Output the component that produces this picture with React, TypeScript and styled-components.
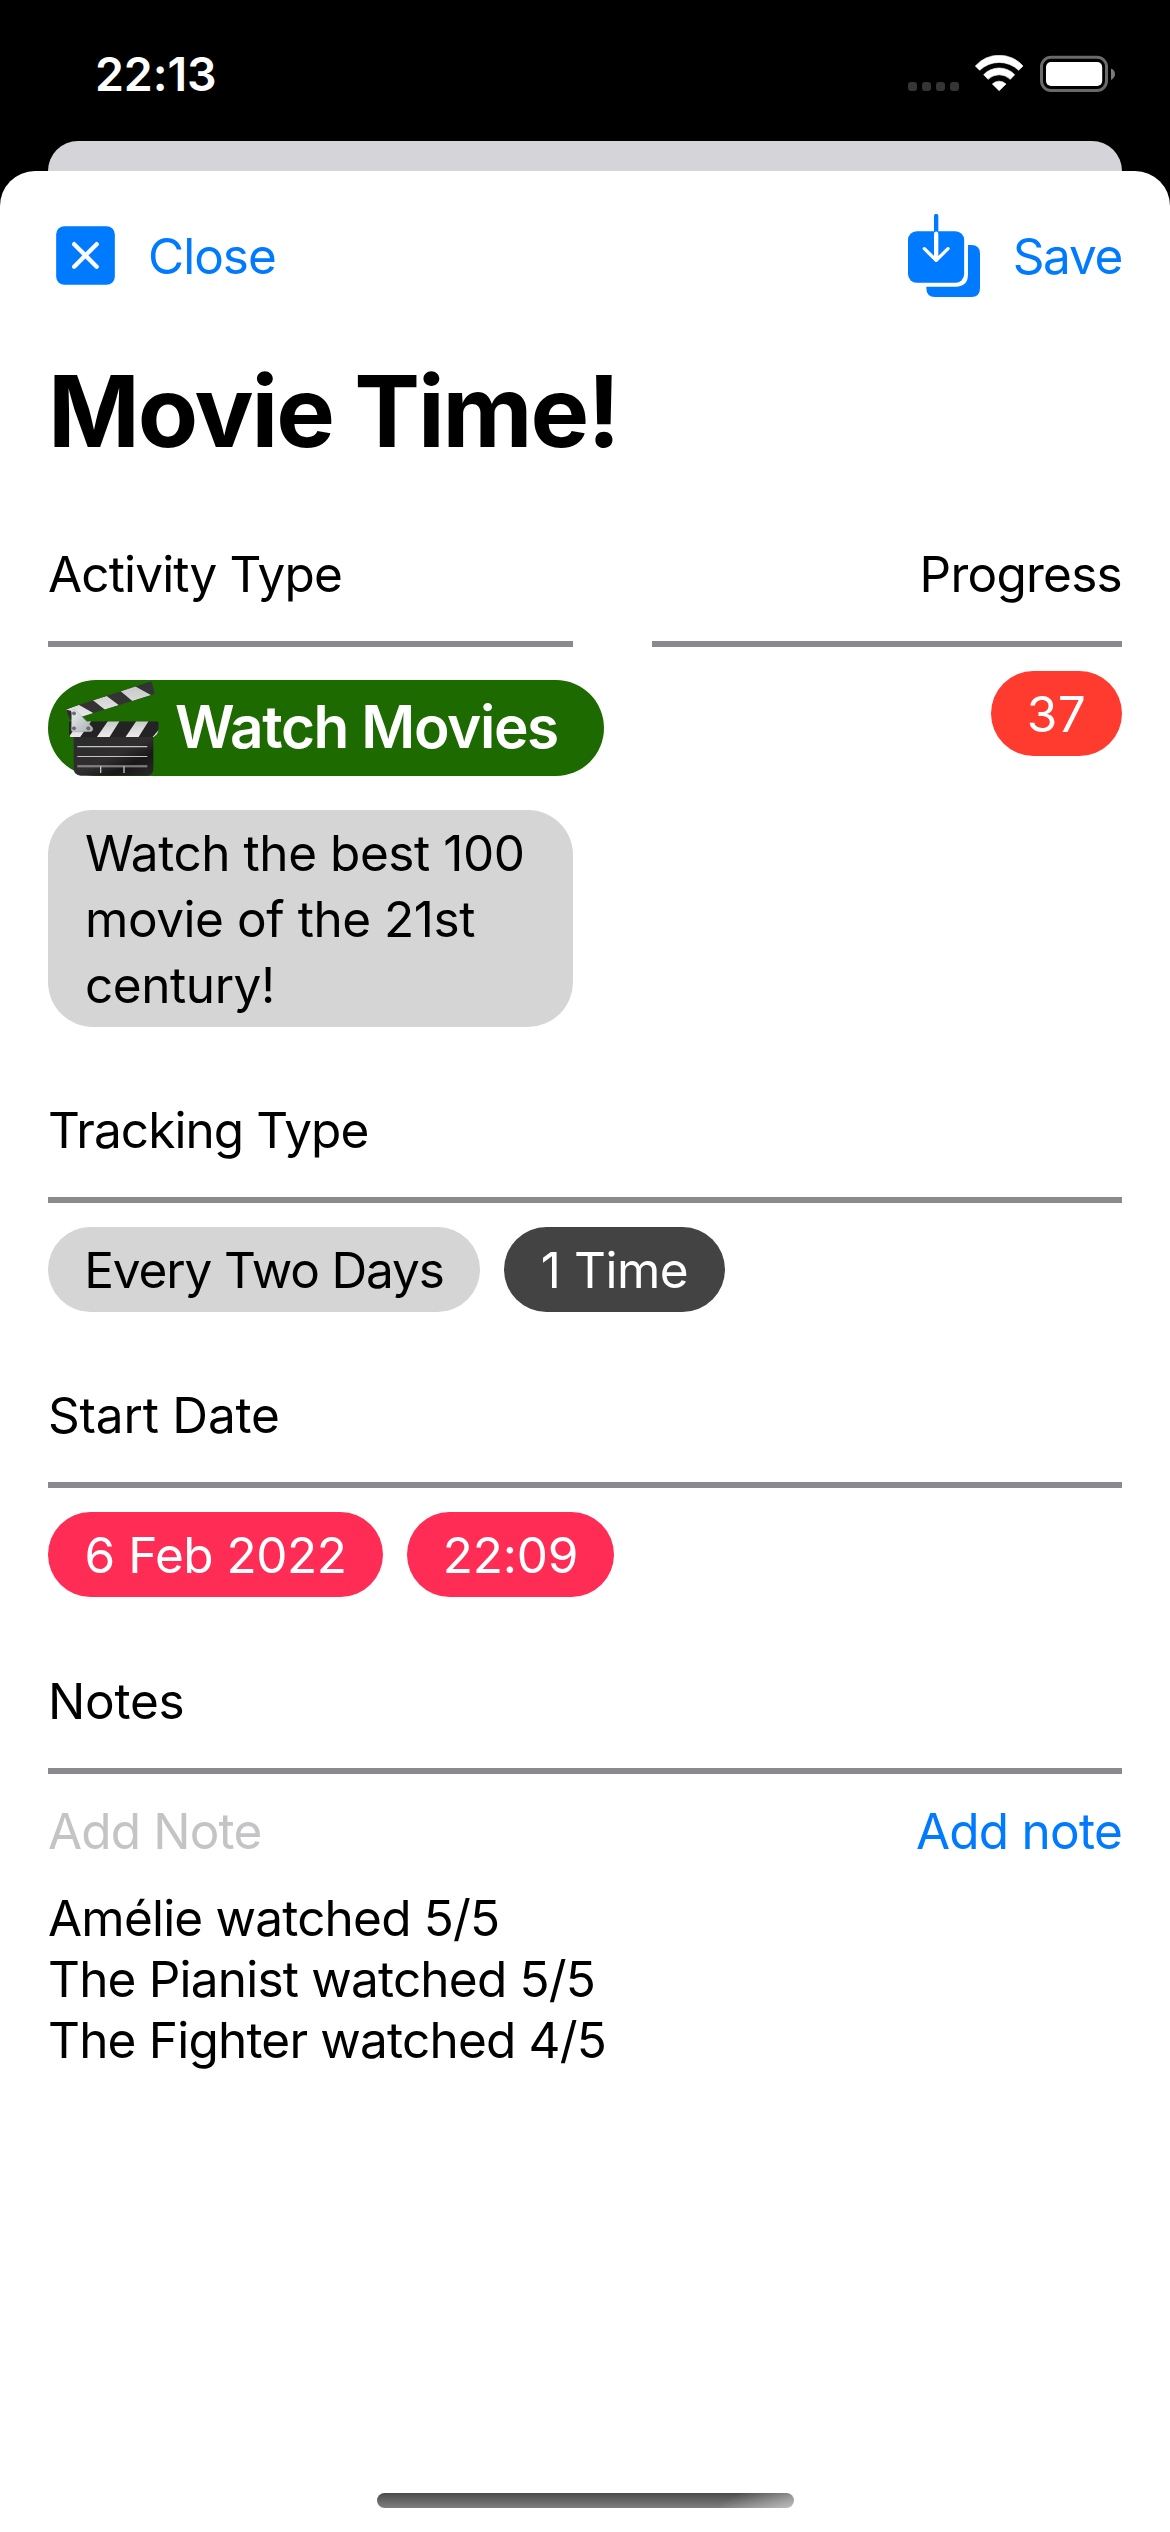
import React from "react";
import styled, { createGlobalStyle } from "styled-components";

const color = {
  tint: "#007aff",
  rule: "#8a898e",
  chip: "#d5d5d5",
  chipDark: "#434343",
  green: "#1d6a00",
  red: "#ff3b30",
  pink: "#ff2d55",
  placeholder: "#c4c4c6",
};

const GlobalStyle = createGlobalStyle`
  * { box-sizing: border-box; }
  html, body { margin: 0; background: #000; }
  body {
    font-family: Inter, Roboto, "Liberation Sans", sans-serif;
    font-size: 49.5px;
    color: #000;
  }
  svg { display: block; flex: none; }
`;

const Screen = styled.div`
  width: 1170px;
  height: 2532px;
  display: flex;
  flex-direction: column;
  background: #000;
  overflow: hidden;
`;

const StatusBar = styled.header`
  flex: none;
  display: flex;
  justify-content: space-between;
  align-items: flex-start;
  height: 141px;
  padding: 44px 55px 0 95px;
`;

const Clock = styled.span`
  font-size: 46.5px;
  font-weight: 600;
  line-height: 61px;
  letter-spacing: -0.1px;
  color: #fff;
`;

const StatusIcons = styled.div`
  display: flex;
  gap: 16px;
  padding-top: 11px;
`;

const BackSheet = styled.div`
  flex: none;
  height: 30px;
  margin: 0 48px;
  border-radius: 33px 33px 0 0;
  background: #d5d4d9;
`;

const Sheet = styled.main`
  flex: 1;
  display: flex;
  flex-direction: column;
  padding: 40px 48px 24px;
  border-radius: 35px 35px 0 0;
  background: #fff;
`;

const Toolbar = styled.div`
  display: flex;
  justify-content: space-between;
  align-items: center;
  height: 90px;
`;

const ToolButton = styled.button<{ $gap: number; $tracking: number; $inset?: number }>`
  display: flex;
  align-items: center;
  gap: ${(p) => p.$gap}px;
  padding: 0 0 0 ${(p) => p.$inset ?? 0}px;
  border: 0;
  background: none;
  font: inherit;
  letter-spacing: ${(p) => p.$tracking}px;
  line-height: 60px;
  color: ${color.tint};

  svg { margin-bottom: 1px; }
`;

const Title = styled.h1`
  margin: 50px 0 0;
  font-size: 98.6px;
  font-weight: 700;
  line-height: 120px;
  letter-spacing: -2.05px;
  white-space: nowrap;
`;

const Columns = styled.div`
  display: grid;
  grid-template-columns: 525px 470px;
  justify-content: space-between;
`;

const Section = styled.section<{ $end?: boolean; $gap?: number }>`
  display: flex;
  flex-direction: column;
  align-items: ${(p) => (p.$end ? "flex-end" : "flex-start")};
  margin-top: ${(p) => p.$gap ?? 73}px;
`;

const SectionLabel = styled.h2<{ $tracking: number }>`
  margin: 0;
  font-size: 49.5px;
  font-weight: 400;
  line-height: 60px;
  letter-spacing: ${(p) => p.$tracking}px;
`;

const Rule = styled.div`
  align-self: stretch;
  height: 6px;
  margin-top: 37px;
  background: ${color.rule};
`;

const ChipRow = styled.div`
  display: flex;
  gap: 24px;
  margin-top: 24px;
`;

const Chip = styled.span<{ $bg: string; $fg?: string; $width: number; $tracking: number }>`
  display: flex;
  justify-content: center;
  width: ${(p) => p.$width}px;
  height: 85px;
  border-radius: 42.5px;
  background: ${(p) => p.$bg};
  color: ${(p) => p.$fg ?? "#fff"};
  line-height: 86px;
  letter-spacing: ${(p) => p.$tracking}px;
  white-space: nowrap;
`;

const ActivityChip = styled.div`
  display: flex;
  align-items: center;
  gap: 16px;
  width: 556px;
  height: 96px;
  margin-top: 33px;
  padding-left: 17px;
  border-radius: 48px;
  background: ${color.green};
  color: #fff;
  font-size: 58.5px;
  font-weight: 600;
  line-height: 70px;
  letter-spacing: -1.4px;
  white-space: nowrap;
`;

const ActivityName = styled.span`
  padding-bottom: 2px;
`;

const Description = styled.p`
  align-self: stretch;
  margin: 34px 0 0;
  padding: 10px 30px 10px 37px;
  height: 217px;
  border-radius: 45px;
  background: ${color.chip};
  line-height: 66px;
  letter-spacing: -0.44px;
`;

const NoteEntry = styled.div`
  align-self: stretch;
  display: flex;
  justify-content: space-between;
  margin-top: 27px;
  line-height: 61px;
`;

const Placeholder = styled.span`
  color: ${color.placeholder};
  letter-spacing: -0.85px;
`;

const AddNote = styled.button`
  padding: 0;
  border: 0;
  background: none;
  font: inherit;
  letter-spacing: -0.76px;
  color: ${color.tint};
`;

const NoteList = styled.ul`
  margin: 26px 0 0;
  padding: 0;
  list-style: none;
  line-height: 61px;
  letter-spacing: -0.8px;
`;

const HomeIndicator = styled.div`
  align-self: center;
  width: 417px;
  height: 15px;
  margin-top: auto;
  border-radius: 8px;
  background:
    linear-gradient(147deg, rgba(255, 255, 255, 0) 82%, rgba(255, 255, 255, 0.5) 100%),
    linear-gradient(#4b4b4b, #7f7f7f);
`;

const SignalIcon = () => (
  <svg width="51" height="38" viewBox="0 0 51 38" fill="#353535">
    {[0, 14, 28, 42].map((x) => (
      <rect key={x} x={x} y="27" width="9" height="9" rx="3" />
    ))}
  </svg>
);

const WifiIcon = () => (
  <svg width="49" height="38" viewBox="0 0 147 114" fill="#fff" stroke="#fff" strokeWidth="2" strokeLinejoin="round">
    <path d="M1 33A95 95 0 0 1 144 33L131 46A84 84 0 0 0 14 46Z" />
    <path d="M26 59A64 64 0 0 1 119 59L106 73A48 48 0 0 0 39 73Z" />
    <path d="M52 87A29 29 0 0 1 93 87L72.5 107Z" />
  </svg>
);

const BatteryIcon = () => (
  <svg width="75" height="38" viewBox="0 0 75 38">
    <rect x="1.5" y="2.2" width="65" height="33.3" rx="9.5" fill="none" stroke="#6a6a6a" strokeWidth="3" />
    <rect x="6" y="7" width="56.2" height="24" rx="5" fill="#fff" />
    <path d="M71 13.5C76.300 15.500 76.300 22.500 71 25Z" fill="#7a7a7a" />
  </svg>
);

const CloseIcon = () => (
  <svg width="59" height="59" viewBox="0 0 177 177">
    <rect x="0.500" y="0.500" width="176" height="176" rx="25" fill={color.tint} />
    <path d="M54.500 54.500L122 122M122 54.500L54.500 122" stroke="#fff" strokeWidth="13" strokeLinecap="round" />
  </svg>
);

const SaveIcon = () => (
  <svg width="72" height="83" viewBox="0 0 216 249" fill="none" strokeLinecap="round" strokeLinejoin="round">
    <path
      d="M180 93H190Q216 93 216 119V223Q216 249 190 249H81Q55 249 55 223V218H143Q180 218 180 181Z"
      fill={color.tint}
    />
    <rect x="0" y="51.500" width="168.500" height="154.500" rx="26" fill={color.tint} />
    <path d="M84.500 6V51" stroke={color.tint} strokeWidth="13" />
    <path d="M84.500 59V136" stroke="#fff" strokeWidth="13" />
    <path d="M49 104L84.500 139L120 104" stroke="#fff" strokeWidth="10" />
  </svg>
);

const ClapperIcon = () => (
  <svg width="94" height="96" viewBox="45 60 282 288">
    <defs>
      <linearGradient id="slate" x1="0" y1="0" x2="1" y2="1">
        <stop offset="0" stopColor="#2b2a2b" />
        <stop offset="0.500" stopColor="#302e2f" />
        <stop offset="0.720" stopColor="#191718" />
        <stop offset="1" stopColor="#2a2829" />
      </linearGradient>
      <linearGradient id="hinge" x1="0" y1="0" x2="1" y2="1">
        <stop offset="0" stopColor="#eceff1" />
        <stop offset="1" stopColor="#a9aeb2" />
      </linearGradient>
      <linearGradient id="chalk" x1="0" y1="0" x2="0" y2="1">
        <stop offset="0" stopColor="#c9c9c9" />
        <stop offset="1" stopColor="#ececec" />
      </linearGradient>
      <clipPath id="arm">
        <path d="M47 148L300 65Q304 64 306 70L314 99Q315 102 311 103L75 176L62 180Z" />
      </clipPath>
      <clipPath id="bar">
        <path d="M57 184H321Q326 184 326 188V208Q325 222 311 231H61L57 222Z" />
      </clipPath>
    </defs>
    <path d="M71 228H310V328Q309 346 292 347H92Q73 346 71 328Z" fill="url(#slate)" />
    <path d="M82 260H292M82 289.500H292M82 318H292" stroke="#c4c4c4" strokeWidth="3.500" />
    <path d="M82 321H292" stroke="#8d8d8d" strokeWidth="2" />
    <path d="M152 319V339M222 319V339" stroke="#c4c4c4" strokeWidth="4" />
    <g clipPath="url(#arm)">
      <rect x="45" y="60" width="280" height="124" fill="#343334" />
      <path
        d="M46 150L86 134L131 160L72 182ZM129 121L170 108L207 136L165 149ZM212 94L255 79L304 106L248 124Z"
        fill="url(#chalk)"
      />
      <path d="M45 148L62 152L78 180L58 182Z" fill="#2b2a2b" />
    </g>
    <g clipPath="url(#bar)">
      <rect x="55" y="183" width="274" height="50" fill="#242324" />
      <path
        d="M90 183H124L90 232H56ZM174 183H209L178 232H140ZM259 183H296L265 232H226ZM330 205L307 232H330Z"
        fill="url(#chalk)"
      />
    </g>
    <path
      d="M65 154Q65 149 70 149Q75 148 80 153L127 202Q131 208 127 212Q125 215 119 215H69Q64 215 64 210Z"
      fill="url(#hinge)"
      stroke="#8e9396"
      strokeWidth="1"
    />
    <g fill="#6d7174" stroke="#4d5154" strokeWidth="1.500">
      <circle cx="72" cy="160" r="5" />
      <circle cx="72" cy="205" r="5" />
      <circle cx="115" cy="205" r="5" />
    </g>
  </svg>
);

const notes = [
  "Amélie watched 5/5",
  "The Pianist watched 5/5",
  "The Fighter watched 4/5",
];

export default function App() {
  return (
    <>
      <GlobalStyle />
      <Screen>
        <StatusBar>
          <Clock>22:13</Clock>
          <StatusIcons>
            <SignalIcon />
            <WifiIcon />
            <BatteryIcon />
          </StatusIcons>
        </StatusBar>
        <BackSheet />
        <Sheet>
          <Toolbar>
            <ToolButton $gap={33} $tracking={-1} $inset={8}>
              <CloseIcon />
              Close
            </ToolButton>
            <ToolButton $gap={33} $tracking={-1.3}>
              <SaveIcon />
              Save
            </ToolButton>
          </Toolbar>
          <Title>Movie Time!</Title>
          <Columns>
            <Section>
              <SectionLabel $tracking={-0.86}>Activity Type</SectionLabel>
              <Rule />
              <ActivityChip>
                <ClapperIcon />
                <ActivityName>Watch Movies</ActivityName>
              </ActivityChip>
              <Description>Watch the best 100 movie of the 21st century!</Description>
            </Section>
            <Section $end>
              <SectionLabel $tracking={-0.75}>Progress</SectionLabel>
              <Rule />
              <ChipRow>
                <Chip $bg={color.red} $width={131} $tracking={0.4}>37</Chip>
              </ChipRow>
            </Section>
          </Columns>
          <Section>
            <SectionLabel $tracking={-0.92}>Tracking Type</SectionLabel>
            <Rule />
            <ChipRow>
              <Chip $bg={color.chip} $fg="#000" $width={432} $tracking={-1.14}>Every Two Days</Chip>
              <Chip $bg={color.chipDark} $width={221} $tracking={-0.47}>1 Time</Chip>
            </ChipRow>
          </Section>
          <Section>
            <SectionLabel $tracking={-0.19}>Start Date</SectionLabel>
            <Rule />
            <ChipRow>
              <Chip $bg={color.pink} $width={335} $tracking={-0.5}>6 Feb 2022</Chip>
              <Chip $bg={color.pink} $width={207} $tracking={-0.2}>22:09</Chip>
            </ChipRow>
          </Section>
          <Section $gap={74}>
            <SectionLabel $tracking={-0.26}>Notes</SectionLabel>
            <Rule />
            <NoteEntry>
              <Placeholder>Add Note</Placeholder>
              <AddNote>Add note</AddNote>
            </NoteEntry>
            <NoteList>
              {notes.map((note) => (
                <li key={note}>{note}</li>
              ))}
            </NoteList>
          </Section>
          <HomeIndicator />
        </Sheet>
      </Screen>
    </>
  );
}
